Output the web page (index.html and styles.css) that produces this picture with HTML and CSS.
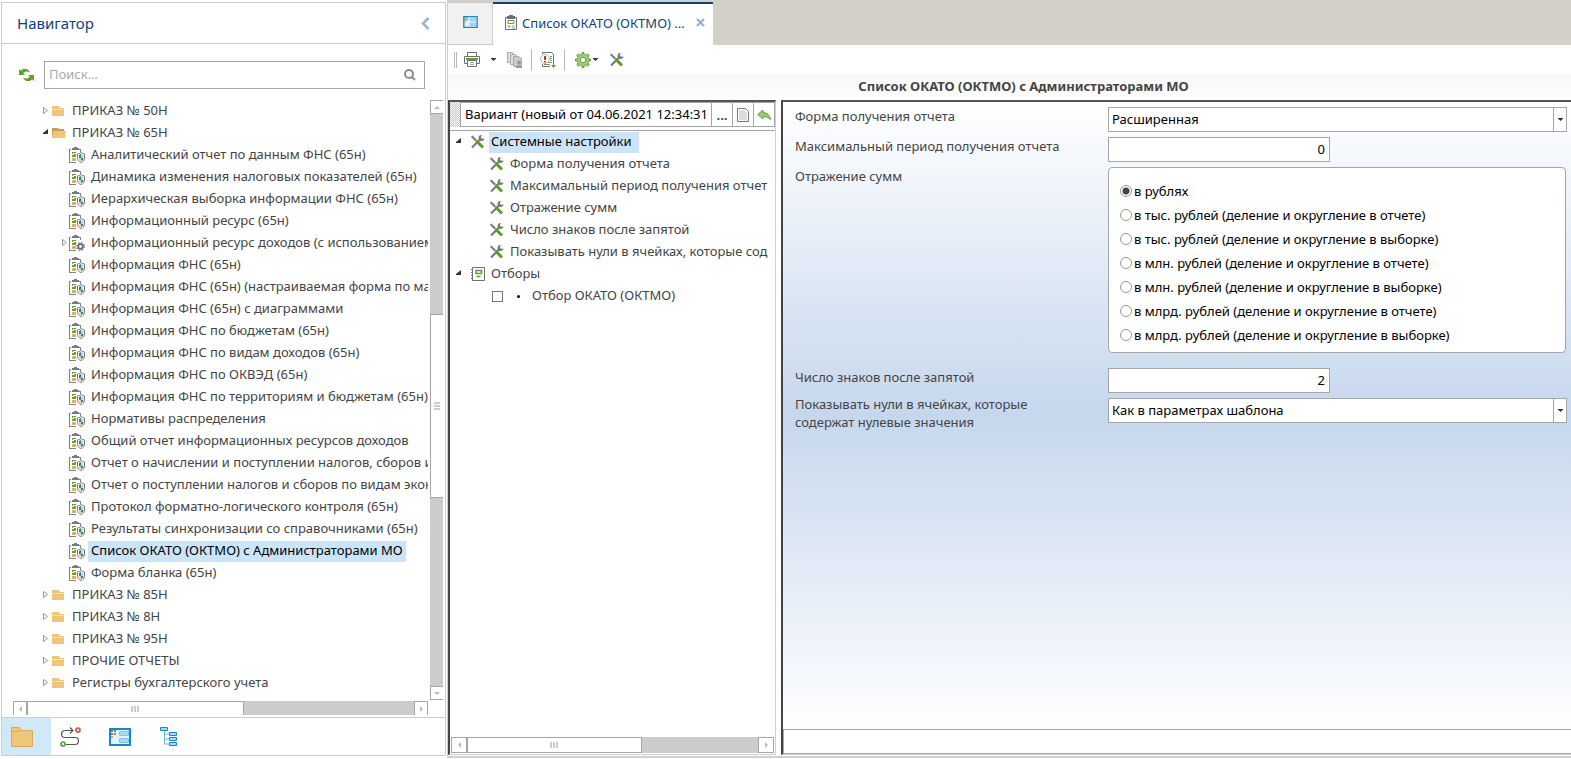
FILE: index.html
```html
<!DOCTYPE html>
<html lang="ru">
<head>
<meta charset="utf-8">
<title>Навигатор</title>
<link rel="stylesheet" href="styles.css">
</head>
<body>
<svg class="sprite" aria-hidden="true">
  <symbol id="closed" viewBox="0 0 6 8"><path d="M.5.5v6l4-3z" fill="#fff" stroke="#999"/></symbol>
  <symbol id="open" viewBox="0 0 6 8"><path d="M5 0v5H0V4z" fill="#333"/></symbol>
  <symbol id="folder" viewBox="0 0 14 12"><path d="M0 1h7l1 2h4v1H0z" fill="#efc57a"/><path d="M0 4.500h12V11H0z" fill="#efc57a"/></symbol>
  <symbol id="folder-open" viewBox="0 0 14 12"><path d="M0 1h6l1 1h5v2H0z" fill="#c79f57"/><path d="M1 4h13l-1 7H0z" fill="#efc57a"/><path d="M0 4h1.500L0 11z" fill="#c79f57"/></symbol>
  <symbol id="clip" viewBox="0 0 17 17"><path d="M0 2h2v1H1v12h6v1H0zM10 2h2v3h-1V3h-1z" fill="#7f828a"/><path d="M3 1h2V0h3v1h2v2H3z" fill="#777a82"/><path d="M3 5h4v1H4v1h3v3H3V8h2V7H3z" fill="#68a030"/><path d="M3 11h4v3H3z" fill="#e8b468"/><path d="M4 12h2v1H4z" fill="#e08a2c"/></symbol>
  <symbol id="report" viewBox="0 0 17 17"><use href="#clip"/><path d="M12 5.500c1 .8 2 1.200 3.500 1.400v4.600c0 2-1.500 3.200-3.500 4-2-.8-3.500-2-3.500-4V6.900C10 6.700 11 6.300 12 5.500z" fill="#fff" stroke="#777a82"/><path d="M10 8l2-1v4h-2zM12 11h2.500c0 1.500-1 2.500-2.500 3z" fill="#1b7fd0"/><path d="M12 7l2.500 1v3H12zM9.500 11H12v3c-1.500-.5-2.500-1.500-2.500-3z" fill="#f5cf70"/></symbol>
  <symbol id="report-gear" viewBox="0 0 17 17"><use href="#clip"/><circle cx="11.500" cy="11.500" r="4.500" fill="#fff"/><circle cx="11.500" cy="11.500" r="2.300" fill="#fff" stroke="#696d75" stroke-width="1.700"/><circle cx="11.500" cy="11.500" r="3.700" fill="none" stroke="#696d75" stroke-width="1.500" stroke-dasharray="1.450 1.456"/></symbol>
  <symbol id="tools" viewBox="0 0 14 14"><path d="M1 12.500l8-8" stroke="#777a7f" stroke-width="2.200"/><path d="M10.800 0a3 3 0 1 0 2.700 3.200L11.500 4 9.800 2.300z" fill="#777a7f"/><path d="M.3 1L1.500.5 6 5 4.500 6.500l-4-4z" fill="#777a7f"/><path d="M5.500 6l6.500 6.500" stroke="#5e9c24" stroke-width="3"/></symbol>
  <symbol id="panel" viewBox="0 0 22 18"><path d="M1 1h20v16H1z" fill="#e3f3fc" stroke="#1787cc" stroke-width="2"/><path d="M10.500 3.500h9v4h-9zM10.500 10.500h9v4h-9z" fill="#a9d8f5" stroke="#86c3ea"/><path d="M5 5h2v2H5z" fill="#3f9ad6"/><path d="M5 2h2v2H5z" fill="#5aa03a"/><path d="M2 2h2v2H2z" fill="#5aa03a"/><path d="M2 5h2v2H2z" fill="#e0553a"/><path d="M2 8h2v2H2z" fill="#eda63c"/></symbol>
  <symbol id="down" viewBox="0 0 5 3"><path d="M0 0h5v.5L2.500 3 0 .5z" fill="currentColor"/></symbol>
  <symbol id="bar-left" viewBox="0 0 3 6"><path d="M3 0v6L0 3z" fill="currentColor"/></symbol>
  <symbol id="bar-right" viewBox="0 0 3 6"><path d="M0 0v6l3-3z" fill="currentColor"/></symbol>
  <symbol id="bar-up" viewBox="0 0 6 3"><path d="M0 3h6L3 0z" fill="currentColor"/></symbol>
  <symbol id="bar-down" viewBox="0 0 6 3"><path d="M0 0h6L3 3z" fill="currentColor"/></symbol>
</svg>
<div class="app">
  <aside class="navigator">
    <header class="nav-header">
      <h1>Навигатор</h1>
      <button class="plain" aria-label="Свернуть"><svg width="9" height="13" viewBox="0 0 9 13"><path d="M7.500 1L2 6.500 7.500 12" fill="none" stroke="#9db5d0" stroke-width="2.500"/></svg></button>
    </header>
    <div class="search-row">
      <button class="plain" aria-label="Обновить"><svg width="16" height="14" viewBox="0 0 16 14"><path d="M0 1v6h6L4.200 5.200C6 3 9 3 11 4.500 9.500.5 4.500-.5 2 2.800zM15 13V7H9l1.800 1.800C9 11 6 11 4 9.500c1.500 4 6.500 5 9 1.700z" fill="#5fa02b"/></svg></button>
      <div class="search-box">
        <input type="search" placeholder="Поиск..." aria-label="Поиск">
        <button class="plain" aria-label="Найти"><svg width="12" height="12" viewBox="0 0 12 12"><circle cx="5" cy="5" r="4" fill="none" stroke="#8c8c8c" stroke-width="2"/><path d="M8 8l3 3" stroke="#8c8c8c" stroke-width="2"/></svg></button>
      </div>
    </div>
    <div class="tree-area">
      <ul class="tree nav-tree">
        <li class="dir"><svg class="arrow"><use href="#closed"/></svg><svg class="folder"><use href="#folder"/></svg><span>ПРИКАЗ № 50Н</span></li>
        <li class="dir"><svg class="arrow"><use href="#open"/></svg><svg class="folder"><use href="#folder-open"/></svg><span>ПРИКАЗ № 65Н</span></li>
        <li class="leaf"><svg class="report"><use href="#report"/></svg><span>Аналитический отчет по данным ФНС (65н)</span></li>
        <li class="leaf"><svg class="report"><use href="#report"/></svg><span>Динамика изменения налоговых показателей (65н)</span></li>
        <li class="leaf"><svg class="report"><use href="#report"/></svg><span>Иерархическая выборка информации ФНС (65н)</span></li>
        <li class="leaf"><svg class="report"><use href="#report"/></svg><span>Информационный ресурс (65н)</span></li>
        <li class="leaf expandable"><svg class="arrow"><use href="#closed"/></svg><svg class="report"><use href="#report-gear"/></svg><span>Информационный ресурс доходов (с использованием</span></li>
        <li class="leaf"><svg class="report"><use href="#report"/></svg><span>Информация ФНС (65н)</span></li>
        <li class="leaf"><svg class="report"><use href="#report"/></svg><span>Информация ФНС (65н) (настраиваемая форма по мас</span></li>
        <li class="leaf"><svg class="report"><use href="#report"/></svg><span>Информация ФНС (65н) с диаграммами</span></li>
        <li class="leaf"><svg class="report"><use href="#report"/></svg><span>Информация ФНС по бюджетам (65н)</span></li>
        <li class="leaf"><svg class="report"><use href="#report"/></svg><span>Информация ФНС по видам доходов (65н)</span></li>
        <li class="leaf"><svg class="report"><use href="#report"/></svg><span>Информация ФНС по ОКВЭД (65н)</span></li>
        <li class="leaf"><svg class="report"><use href="#report"/></svg><span>Информация ФНС по территориям и бюджетам (65н)</span></li>
        <li class="leaf"><svg class="report"><use href="#report"/></svg><span>Нормативы распределения</span></li>
        <li class="leaf"><svg class="report"><use href="#report"/></svg><span>Общий отчет информационных ресурсов доходов</span></li>
        <li class="leaf"><svg class="report"><use href="#report"/></svg><span>Отчет о начислении и поступлении налогов, сборов и</span></li>
        <li class="leaf"><svg class="report"><use href="#report"/></svg><span>Отчет о поступлении налогов и сборов по видам экон</span></li>
        <li class="leaf"><svg class="report"><use href="#report"/></svg><span>Протокол форматно-логического контроля (65н)</span></li>
        <li class="leaf"><svg class="report"><use href="#report"/></svg><span>Результаты синхронизации со справочниками (65н)</span></li>
        <li class="leaf"><svg class="report"><use href="#report"/></svg><span class="selected">Список ОКАТО (ОКТМО) с Администраторами МО</span></li>
        <li class="leaf"><svg class="report"><use href="#report"/></svg><span>Форма бланка (65н)</span></li>
        <li class="dir"><svg class="arrow"><use href="#closed"/></svg><svg class="folder"><use href="#folder"/></svg><span>ПРИКАЗ № 85Н</span></li>
        <li class="dir"><svg class="arrow"><use href="#closed"/></svg><svg class="folder"><use href="#folder"/></svg><span>ПРИКАЗ № 8Н</span></li>
        <li class="dir"><svg class="arrow"><use href="#closed"/></svg><svg class="folder"><use href="#folder"/></svg><span>ПРИКАЗ № 95Н</span></li>
        <li class="dir"><svg class="arrow"><use href="#closed"/></svg><svg class="folder"><use href="#folder"/></svg><span>ПРОЧИЕ ОТЧЕТЫ</span></li>
        <li class="dir"><svg class="arrow"><use href="#closed"/></svg><svg class="folder"><use href="#folder"/></svg><span>Регистры бухгалтерского учета</span></li>
      </ul>
      <div class="vbar">
        <button aria-label="Вверх"><svg width="6" height="3"><use href="#bar-up"/></svg></button>
        <div class="vtrack"><div class="vthumb"><i></i><i></i><i></i></div></div>
        <button aria-label="Вниз"><svg width="6" height="3"><use href="#bar-down"/></svg></button>
      </div>
    </div>
    <div class="hbar nav-hbar">
      <button aria-label="Влево"><svg width="3" height="6"><use href="#bar-left"/></svg></button>
      <div class="htrack"><div class="hthumb"><i></i><i></i><i></i></div></div>
      <button aria-label="Вправо"><svg width="3" height="6"><use href="#bar-right"/></svg></button>
    </div>
    <nav class="nav-modes">
      <button class="active" aria-label="Папки"><svg width="22" height="20" viewBox="0 0 22 20"><path d="M.5.500h8l2 3h11v16H.5z" fill="#efc57a" stroke="#d9ab59"/><path d="M.5 4.500h8l2-1.500" fill="none" stroke="#d9ab59"/></svg></button>
      <button aria-label="Маршруты"><svg width="22" height="20" viewBox="0 0 22 20"><path d="M12 3.500H5a3.500 3.500 0 0 0 0 7h10a3.500 3.500 0 0 1 0 7H6M10 .5l3 3-3 3" fill="none" stroke="#555" stroke-width="1.200"/><circle cx="18" cy="3" r="2" fill="#fff" stroke="#d9503c" stroke-width="1.700"/><circle cx="3" cy="17" r="2" fill="#fff" stroke="#55a045" stroke-width="1.700"/></svg></button>
      <button aria-label="Панели"><svg width="22" height="18"><use href="#panel"/></svg></button>
      <button aria-label="Структура"><svg width="18" height="20" viewBox="0 0 18 20"><path d="M4.500 4v13H9M4.500 7H9M4.500 12H9" fill="none" stroke="#6db4e2"/><path d="M.5.5h7v3h-7zM9.500 5.500h7v3h-7zM9.500 10.500h7v3h-7zM9.500 15.500h7v3h-7z" fill="#a9d8f5" stroke="#1787cc"/></svg></button>
    </nav>
  </aside>

  <main class="workspace">
    <div class="tabs" role="tablist">
      <button class="tab home-tab" role="tab" aria-label="Главная"><svg width="15" height="12"><use href="#panel"/></svg></button>
      <div class="tab active-tab" role="tab">
        <svg width="12" height="15" viewBox="0 0 12 15"><path d="M.5 2.500h11v12H.5z" fill="#fff" stroke="#6b6f76"/><path d="M2 1h2V0h4v1h2v3H2z" fill="#6b6f76"/><path d="M3 5.500h6v3H3z" fill="#fff" stroke="#68a030"/><path d="M2.500 10.500h3v2h-3z" fill="#e0a03c"/><path d="M7 11h3M7 13h3" stroke="#999"/></svg>
        <span>Список ОКАТО (ОКТМО) ...</span>
        <button class="plain" aria-label="Закрыть"><svg width="9" height="9" viewBox="0 0 9 9"><path d="M1 1l7 7M8 1L1 8" stroke="#9db0c8" stroke-width="2.200"/></svg></button>
      </div>
    </div>
    <div class="toolbar">
      <span class="grip"></span>
      <button class="plain tool-print" aria-label="Печать"><svg width="16" height="15" viewBox="0 0 16 15"><path d="M3.500 4V.5h9V4" fill="#fff" stroke="#6b6f76"/><path d="M.5 4.500h15v7H.5z" fill="#f4f4f4" stroke="#6b6f76"/><path d="M2 6h12v2H2z" fill="#5fa02b"/><path d="M3.500 8.500h9v6h-9z" fill="#fff" stroke="#6b6f76"/><path d="M6 10.500h4M6 12.500h4" stroke="#aaa"/></svg><svg class="caret"><use href="#down"/></svg></button>
      <button class="plain" aria-label="Копии" disabled><svg width="16" height="16" viewBox="0 0 16 16"><path d="M.5.5h5l2 2v8h-7z" fill="#ddd" stroke="#aaa"/><path d="M3.500 2.500h5l2 2v8h-7z" fill="#ddd" stroke="#aaa"/><path d="M6.500 4.500h5l3 2v8h-8z" fill="#ccc" stroke="#aaa"/><circle cx="12" cy="10.500" r="2" fill="#999"/><path d="M9 16c0-4 6-4 6 0z" fill="#999"/></svg></button>
      <span class="separator"></span>
      <button class="plain tool-info" aria-label="Проверка"><svg width="16" height="16" viewBox="0 0 16 16"><path d="M2.500 2V.500h9l2 2V10M2.500 12v2.500H10" fill="none" stroke="#6b6f76"/><path d="M10 4.500h2M10 6.500h2M10 8.500h2M8 10.500h4M4 12.500h6" stroke="#888"/><circle cx="5" cy="7" r="4.500" fill="#fff" stroke="#9cc77f"/><path d="M5 4v4M5 9v1.500" stroke="#c72f2f" stroke-width="2"/><path d="M13 10h1v3h2l-2.500 3L11 13h2z" fill="#5fa02b"/></svg></button>
      <span class="separator"></span>
      <button class="plain tool-gear" aria-label="Настройки"><svg width="16" height="16" viewBox="0 0 16 16"><path d="M7 .5h2v2l1.700.7 1.800-1.400 1.700 1.700-1.400 1.800.7 1.700h2v2h-2l-.7 1.700 1.400 1.800-1.700 1.700-1.800-1.400L9 13.500v2H7v-2l-1.700-.7-1.800 1.400-1.700-1.700 1.400-1.800L2.500 9h-2V7h2l.7-1.700-1.400-1.800 1.700-1.700 1.800 1.400L7 2.500z" fill="#a5cd84" stroke="#5fa02b"/><circle cx="8" cy="8" r="2.800" fill="#fff" stroke="#5fa02b"/></svg><svg class="caret"><use href="#down"/></svg></button>
      <button class="plain" aria-label="Инструменты"><svg width="14" height="14"><use href="#tools"/></svg></button>
    </div>
    <h2 class="report-title">Список ОКАТО (ОКТМО) с Администраторами МО</h2>
    <div class="panes">
      <section class="variants">
        <div class="variant-row">
          <span class="variant-grip"></span>
          <input type="text" value="Вариант (новый от 04.06.2021 12:34:31" aria-label="Вариант">
          <button class="more" aria-label="Выбрать">...</button>
          <button aria-label="Новый"><svg width="12" height="14" viewBox="0 0 12 14"><path d="M.5.500h8l3 3v10H.5z" fill="#fff" stroke="#777"/><path d="M2 2h6v2h2v8H2z" fill="#ddd"/></svg></button>
          <button aria-label="Вернуть"><svg width="14" height="12" viewBox="0 0 14 12"><path d="M.7 5.500L6 1v2.700c4 0 7 2.300 7.500 7C12 8.500 9.500 7.500 6 7.500V10z" fill="#9fcb7c" stroke="#5fa02b"/></svg></button>
        </div>
        <ul class="tree settings-tree">
          <li class="group"><svg class="arrow"><use href="#open"/></svg><svg class="tool"><use href="#tools"/></svg><span class="selected">Системные настройки</span></li>
          <li class="setting"><svg class="tool"><use href="#tools"/></svg><span>Форма получения отчета</span></li>
          <li class="setting"><svg class="tool"><use href="#tools"/></svg><span>Максимальный период получения отчет</span></li>
          <li class="setting"><svg class="tool"><use href="#tools"/></svg><span>Отражение сумм</span></li>
          <li class="setting"><svg class="tool"><use href="#tools"/></svg><span>Число знаков после запятой</span></li>
          <li class="setting"><svg class="tool"><use href="#tools"/></svg><span>Показывать нули в ячейках, которые сод</span></li>
          <li class="group"><svg class="arrow"><use href="#open"/></svg><svg class="tool" viewBox="0 0 14 14"><path d="M1.500.500h12v13h-12z" fill="#fff" stroke="#6b6f76"/><path d="M0 2.500h2M0 5.500h2M0 8.500h2M0 11.500h2" stroke="#6b6f76"/><path d="M5 3.500h5.500v3H5zM5.500 9.500h4" fill="none" stroke="#5fa02b" stroke-width="1.500"/></svg><span>Отборы</span></li>
          <li class="filter"><input type="checkbox" id="okato"><label for="okato"><b class="dot"></b><span>Отбор ОКАТО (ОКТМО)</span></label></li>
        </ul>
        <div class="hbar">
          <button aria-label="Влево"><svg width="3" height="6"><use href="#bar-left"/></svg></button>
          <div class="htrack"><div class="hthumb"><i></i><i></i><i></i></div></div>
          <button aria-label="Вправо"><svg width="3" height="6"><use href="#bar-right"/></svg></button>
        </div>
      </section>
      <section class="details">
        <form class="params">
          <label for="form">Форма получения отчета</label>
          <div class="select"><select id="form"><option>Расширенная</option></select><svg class="caret"><use href="#down"/></svg></div>
          <label for="period">Максимальный период получения отчета</label>
          <input class="number" id="period" type="text" value="0">
          <span class="label" id="sums">Отражение сумм</span>
          <div class="radios" role="radiogroup" aria-labelledby="sums">
            <label><input type="radio" name="sum" checked>в рублях</label>
            <label><input type="radio" name="sum">в тыс. рублей (деление и округление в отчете)</label>
            <label><input type="radio" name="sum">в тыс. рублей (деление и округление в выборке)</label>
            <label><input type="radio" name="sum">в млн. рублей (деление и округление в отчете)</label>
            <label><input type="radio" name="sum">в млн. рублей (деление и округление в выборке)</label>
            <label><input type="radio" name="sum">в млрд. рублей (деление и округление в отчете)</label>
            <label><input type="radio" name="sum">в млрд. рублей (деление и округление в выборке)</label>
          </div>
          <label for="digits">Число знаков после запятой</label>
          <input class="number" id="digits" type="text" value="2">
          <label class="long" for="zeros">Показывать нули в ячейках, которые содержат нулевые значения</label>
          <div class="select"><select id="zeros"><option>Как в параметрах шаблона</option></select><svg class="caret"><use href="#down"/></svg></div>
        </form>
        <div class="hint"></div>
      </section>
    </div>
  </main>
</div>
</body>
</html>
```
FILE: styles.css
```css
* { box-sizing: border-box; }
body {
  margin: 0;
  background: #fff;
  color: #444;
  font: 13px/18px "Noto Sans", "Open Sans", sans-serif;
}
button, input, select { font: inherit; color: inherit; margin: 0; }
button { padding: 0; background: none; border: 0; }
h1, h2 { margin: 0; font-weight: 400; }
svg { display: block; flex: none; }
.sprite { display: none; }
.plain { display: flex; align-items: center; }

.app {
  display: flex;
  gap: 1px;
  min-height: 100vh;
  padding-bottom: 1px;
}

/* navigator */
.navigator {
  display: flex;
  flex-direction: column;
  width: 445px;
  margin: 2px 0 2px 1px;
  border: 1px solid #ccc;
  flex: none;
}
.nav-header {
  display: flex;
  align-items: center;
  justify-content: space-between;
  height: 41px;
  padding: 0 15px;
  border-bottom: 1px solid #ccc;
}
.nav-header h1 { font-size: 15px; line-height: 20px; color: #143f7c; }
.search-row {
  display: flex;
  align-items: center;
  gap: 9px;
  padding: 17px 20px 0 17px;
}
.search-box {
  display: flex;
  align-items: center;
  flex: 1;
  height: 28px;
  padding: 0 8px 0 4px;
  border: 1px solid #a6a6a6;
}
.search-box input { flex: 1; min-width: 0; padding: 0 0 2px; border: 0; outline: 0; background: none; }
.search-box input::placeholder { color: #aaa; }
.tree-area { display: flex; flex: 1; margin: 11px 2px 0 11px; }

.tree { list-style: none; margin: 0; padding: 0; flex: 1; min-width: 0; overflow: hidden; }
.tree li { display: flex; align-items: center; height: 22px; white-space: nowrap; }
.tree span { padding: 0 3px 2px; line-height: 19px; }
.tree .selected { background: #cce4f7; color: #000; }
.arrow { width: 6px; height: 8px; }
.nav-tree { margin-right: 2px; }
.dir { padding-left: 30px; }
.dir .folder { width: 14px; height: 12px; margin: 0 3px; }
.leaf { padding-left: 56px; }
.leaf.expandable { padding-left: 49px; }
.expandable .arrow { margin-right: 1px; }
.leaf .report { width: 17px; height: 17px; margin-right: 2px; }

.vbar { display: flex; flex-direction: column; width: 13px; color: #bbb; }
.vbar button {
  display: grid;
  place-items: center;
  height: 14px;
  border: 1px solid #a6a6a6;
  border-right: 0;
}
.vtrack { flex: 1; background: #ccc; padding-top: 200px; }
.vthumb {
  display: flex;
  flex-direction: column;
  align-items: center;
  justify-content: center;
  gap: 1px;
  height: 184px;
  background: #fff;
  border: 1px solid #a6a6a6;
  border-right: 0;
}
.vthumb i { width: 6px; height: 2px; background: #ccc; }

.hbar { display: flex; height: 16px; color: #bbb; }
.hbar button { display: grid; place-items: center; width: 16px; border: 1px solid #a6a6a6; }
.htrack { flex: 1; background: #ccc; }
.hthumb {
  display: flex;
  align-items: center;
  justify-content: center;
  gap: 1px;
  width: 60%;
  height: 100%;
  background: #fff;
  border: 1px solid #a6a6a6;
}
.hthumb i { width: 2px; height: 6px; background: #ccc; }
.nav-hbar { height: 14px; margin: 1px 17px 0 11px; }
.nav-hbar button { width: 14px; border-bottom: 0; }
.nav-hbar .hthumb { width: 56%; border-bottom: 0; }
.nav-modes { display: flex; height: 38px; margin-top: 2px; border-top: 1px solid #ccc; }
.nav-modes button { display: grid; place-items: center; width: 49px; padding-right: 9px; }
.nav-modes .active { background: #d0e9f9; }

/* workspace */
.workspace {
  display: flex;
  flex-direction: column;
  flex: 1;
  min-width: 0;
  border-left: 1px solid #ccc;
  border-bottom: 2px solid #d0d0d0;
}
.tabs { display: flex; height: 45px; padding-top: 2px; background: #d4cfc8; }
.home-tab {
  display: grid;
  place-items: center;
  width: 45px;
  padding-bottom: 4px;
  background: #f1f1f1;
  border: 1px solid #ccc;
  border-width: 1px 1px 1px 0;
}
.active-tab {
  display: flex;
  align-items: center;
  width: 220px;
  padding: 0 8px 4px 12px;
  gap: 5px;
  background: #fff;
  border-top: 2px solid #143f7c;
  color: #143f7c;
}
.active-tab span { flex: 1; }
.toolbar { display: flex; align-items: center; height: 29px; padding-left: 6px; }
.toolbar .caret { margin-left: 11px; }
.grip { width: 3px; height: 16px; border: 1px solid #bbb; border-width: 0 1px; margin-right: 7px; }
.separator { width: 1px; height: 22px; background: #bbb; margin: 0 8px; }
.tool-print { margin-right: 11px; }
.caret { width: 5px; height: 3px; color: #333; }
.toolbar .tool-gear { margin: 0 12px 0 2px; }
.toolbar .tool-gear .caret { margin-left: 2px; }
.report-title {
  height: 26px;
  line-height: 24px;
  font-size: 13px;
  font-weight: 700;
  text-align: center;
  padding-left: 28px;
  background: linear-gradient(#f7f7f7, #fff);
}
.panes { display: flex; gap: 5px; flex: 1; margin-bottom: 1px; }
.variants {
  display: flex;
  flex-direction: column;
  width: 328px;
  border: 2px solid #444;
  border-color: #555 #d4d0c8 #d4d0c8 #444;
  border-width: 2px 1px 1px 2px;
  flex: none;
}
.variant-row { display: flex; height: 29px; padding-bottom: 3px; border-bottom: 1px solid #a6a6a6; color: #000; }
.variant-grip {
  width: 10px;
  background: repeating-conic-gradient(#b4cccc 0 25%, #fff 0 50%) 0 0 / 2px 2px;
}
.variant-row input { flex: 1; min-width: 0; padding: 0 4px 2px; border: 1px solid #a6a6a6; }
.variant-row button { display: grid; place-items: center; width: 21px; border: 1px solid #a6a6a6; border-left: 0; }
.variant-row .more { color: #1f4f9a; font-weight: 700; }
.group { padding-left: 6px; }
.group .arrow { margin-right: 9px; }
.tool { width: 14px; height: 14px; margin-right: 4px; }
.tree .group span { padding-left: 2px; }
.tree .group .selected { padding-right: 7px; }
.settings-tree .setting { padding-left: 40px; }
.settings-tree .setting span { padding-left: 2px; }
.filter { padding-left: 42px; }
.filter input { appearance: none; width: 11px; height: 11px; border: 1px solid #777; background: #fff; }
.filter label { display: flex; align-items: center; gap: 9px; padding-left: 14px; }
.dot { width: 3px; height: 3px; border-radius: 50%; background: #000; }
.variants .hbar { margin: 0 1px 1px; }

.details {
  display: flex;
  flex-direction: column;
  flex: 1;
  min-width: 0;
  border: 2px solid #444;
  border-color: #555 #444 #d4d0c8;
  border-width: 2px 0 1px 2px;
}
.params {
  display: grid;
  grid-template-columns: 308px minmax(0, 1fr);
  column-gap: 5px;
  row-gap: 2px;
  align-content: start;
  align-items: start;
  flex: 1;
  padding: 2px 4px 2px 12px;
  background: linear-gradient(#fff, #c6d7ed 50%, #fff);
}
.params > label, .label { padding-top: 3px; }
.params > .long { padding: 0 60px 0 0; }
.number, .select, .radios { margin-top: 3px; }
.number {
  width: 222px;
  height: 25px;
  padding: 0 4px 2px;
  border: 1px solid #a6a6a6;
  background: #fff;
  color: #000;
  text-align: right;
}
.select { display: grid; grid-template-columns: minmax(0, 1fr) 14px; height: 25px; }
.select select {
  grid-area: 1 / 1 / 2 / 3;
  appearance: none;
  padding: 0 16px 2px 3px;
  border: 1px solid #a6a6a6;
  border-radius: 0;
  background: linear-gradient(#a6a6a6, #a6a6a6) right 13px top 0 / 1px 100% no-repeat border-box #fff;
  color: #000;
}
.select .caret { grid-area: 1 / 2 / 2 / 3; place-self: center; pointer-events: none; }
.radios {
  margin-right: 1px;
  margin-bottom: 10px;
  padding: 11px 11px 5px;
  border: 1px solid #a6a6a6;
  border-radius: 4px;
  background: #fff;
  color: #000;
}
.radios label { display: flex; align-items: center; gap: 2px; height: 24px; }
.radios input {
  appearance: none;
  width: 12px;
  height: 12px;
  border: 1px solid #999;
  border-radius: 50%;
  background: #fff;
}
.radios input:checked { background: radial-gradient(circle, #444 3px, #fff 4px); }
.hint { height: 25px; background: #fff; border: 1px solid #a6a6a6; border-right: 0; }
```
